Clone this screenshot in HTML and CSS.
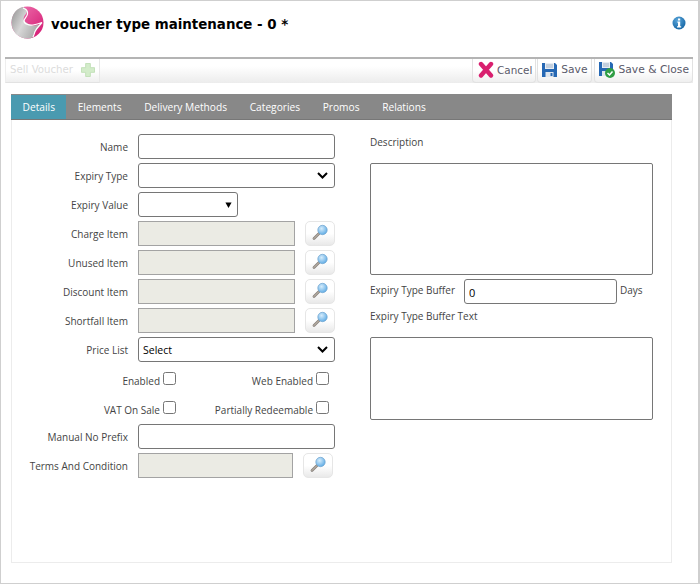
FILE: index.html
```html
<!DOCTYPE html>
<html lang="en">
<head>
<meta charset="utf-8">
<title>voucher type maintenance</title>
<link rel="stylesheet" href="styles.css">
</head>
<body>
<div class="window">
  <header class="head">
    <svg class="logo" width="33" height="33" viewBox="0 0 33 33">
      <defs>
        <linearGradient id="lg" x1="0" y1="0" x2="1" y2="0.5"><stop offset="0" stop-color="#8f8f8f"/><stop offset="0.5" stop-color="#d8d8d8"/><stop offset="1" stop-color="#a8a8a8"/></linearGradient>
        <linearGradient id="lp" x1="0" y1="0" x2="1" y2="1"><stop offset="0" stop-color="#f07ab4"/><stop offset="1" stop-color="#d3146f"/></linearGradient>
      </defs>
      <circle cx="16.5" cy="16.5" r="16" fill="url(#lp)"/>
      <path d="M12 1C5 2.500.5 9 .5 16.500c0 9 7 16 15.500 16 2.500 0 4.500-.5 6-1.500.5-2 .5-3.500 2-5 2-3 4.500-5.500 7-8.500-3 1.500-9 3.500-13.500.5-3-2-6-4 -4.500-7 1-2.500 3.500-4 3-7C16 3 14 2 12 1z" fill="url(#lg)"/>
      <path d="M12 2c3 1 5 3 4.500 6-.5 3-3.500 4.500-3.500 7 0 3 5 4.500 9 4 3.500-.5 6.500-1.500 9-2.500-2.500 3-5.500 5.500-7 9-.5 1.500-1 3.500-2 5.500" fill="none" stroke="#fff" stroke-width="1.200"/>
    </svg>
    <h1 class="title">voucher type maintenance - 0 *</h1>
    <svg class="info" width="14" height="14" viewBox="0 0 14 14">
      <defs><radialGradient id="ib" cx=".4" cy=".3" r=".8"><stop offset="0" stop-color="#5aa6da"/><stop offset="1" stop-color="#0d5e9e"/></radialGradient></defs>
      <circle cx="7" cy="7" r="6.500" fill="url(#ib)"/>
      <path d="M6 2.500h2.200v2H6zM5.400 5.500h2.800v4.700h1v1.300H5v-1.300h1V6.800h-.6z" fill="#fff"/>
    </svg>
  </header>

  <div class="toolbar">
    <button class="tool tool-off" type="button">Sell Voucher
      <svg width="14" height="14" viewBox="0 0 15 15"><path d="M5 .5h5v4.500h4.500v5H10v4.500H5V10H.5V5H5z" fill="#d3ecca" stroke="#c0dfb6"/></svg>
    </button>
    <div class="tool-right">
      <button class="tool tool-cancel" type="button">
        <svg width="16" height="17" viewBox="0 0 16 17"><path d="M3 3l10 11.500M13 3L3 14.500" fill="none" stroke="#d9206f" stroke-width="4.400" stroke-linecap="round"/></svg>
        Cancel</button>
      <button class="tool tool-save" type="button">
        <svg width="15" height="15" viewBox="0 0 15 15"><path d="M0 1h13l2 2v12H0z" fill="#2668b4"/><path d="M3 1h9v6H3z" fill="#e8edf3"/><path d="M4 3h7M4 5h7" stroke="#9fb2c8"/><path d="M3.500 10h8v5h-8z" fill="#dfe6ee"/><path d="M8.500 11h2v3h-2z" fill="#2668b4"/></svg>
        Save</button>
      <button class="tool tool-close" type="button">
        <svg width="16" height="16" viewBox="0 0 16 16"><path d="M0 0h12l2 2v12H0z" fill="#2668b4"/><path d="M3 0h8v6H3z" fill="#e8edf3"/><path d="M4 2h6M4 4h6" stroke="#9fb2c8"/><path d="M3 9h7v5H3z" fill="#dfe6ee"/><circle cx="11" cy="11" r="5" fill="#2f9e44"/><path d="M8.500 11l2 2 3-3.500" fill="none" stroke="#fff" stroke-width="1.500"/></svg>
        Save &amp; Close</button>
    </div>
  </div>

  <main class="panel">
    <nav class="tabs">
      <a class="tab tab-on">Details</a>
      <a class="tab">Elements</a>
      <a class="tab">Delivery Methods</a>
      <a class="tab">Categories</a>
      <a class="tab">Promos</a>
      <a class="tab">Relations</a>
    </nav>
    <div class="form">
      <section class="col-left">
        <div class="row"><label class="lbl">Name</label><input class="field" type="text"></div>
        <div class="row"><label class="lbl">Expiry Type</label>
          <div class="select-wrap"><select class="field"><option></option></select>
            <svg class="chev" width="11" height="7" viewBox="0 0 11 7"><path d="M1 1l4.500 4.500L10 1" fill="none" stroke="#000" stroke-width="2"/></svg></div></div>
        <div class="row"><label class="lbl">Expiry Value</label>
          <div class="select-wrap select-short"><select class="field"><option></option></select>
            <svg class="tri" width="7" height="8" viewBox="0 0 8 8"><path d="M.5 1h7L4 7.500z" fill="#000"/></svg></div></div>
        <div class="row"><label class="lbl">Charge Item</label><input class="field off" type="text" disabled>
          <button class="find" type="button"><svg width="20" height="20" viewBox="0 0 20 20"><use href="#mag"/></svg></button></div>
        <div class="row"><label class="lbl">Unused Item</label><input class="field off" type="text" disabled>
          <button class="find" type="button"><svg width="20" height="20" viewBox="0 0 20 20"><use href="#mag"/></svg></button></div>
        <div class="row"><label class="lbl">Discount Item</label><input class="field off" type="text" disabled>
          <button class="find" type="button"><svg width="20" height="20" viewBox="0 0 20 20"><use href="#mag"/></svg></button></div>
        <div class="row"><label class="lbl">Shortfall Item</label><input class="field off" type="text" disabled>
          <button class="find" type="button"><svg width="20" height="20" viewBox="0 0 20 20"><use href="#mag"/></svg></button></div>
        <div class="row"><label class="lbl">Price List</label>
          <div class="select-wrap"><select class="field"><option>Select</option></select>
            <svg class="chev" width="11" height="7" viewBox="0 0 11 7"><path d="M1 1l4.500 4.500L10 1" fill="none" stroke="#000" stroke-width="2"/></svg></div></div>
        <div class="checks">
          <label class="chk">Enabled<input type="checkbox"></label>
          <label class="chk">Web Enabled<input type="checkbox"></label>
          <label class="chk">VAT On Sale<input type="checkbox"></label>
          <label class="chk">Partially Redeemable<input type="checkbox"></label>
        </div>
        <div class="row"><label class="lbl">Manual No Prefix</label><input class="field" type="text"></div>
        <div class="row"><label class="lbl">Terms And Condition</label><input class="field off off-short" type="text" disabled>
          <button class="find" type="button"><svg width="20" height="20" viewBox="0 0 20 20"><use href="#mag"/></svg></button></div>
      </section>
      <section class="col-right">
        <label class="cap cap-desc">Description</label>
        <textarea class="area area-big"></textarea>
        <div class="buffer"><label class="cap buffer-lbl">Expiry Type Buffer</label><input class="field buffer-in" type="text" value="0"><span class="cap buffer-unit">Days</span></div>
        <label class="cap cap-text">Expiry Type Buffer Text</label>
        <textarea class="area area-small"></textarea>
      </section>
    </div>
  </main>
</div>
<svg class="defs" width="0" height="0">
  <defs>
    <radialGradient id="gl" cx=".4" cy=".35" r=".7"><stop offset="0" stop-color="#d6ecfb"/><stop offset="1" stop-color="#5aa9e4"/></radialGradient>
    <symbol id="mag" viewBox="0 0 20 20">
      <path d="M9 9.500L4 14.500" stroke="#8a8580" stroke-width="2.800" stroke-linecap="round"/>
      <path d="M9 9.500L4 14.500" stroke="#cfc3b4" stroke-width="1" stroke-linecap="round"/>
      <circle cx="12.500" cy="6" r="4.700" fill="url(#gl)" stroke="#6ea4cf" stroke-width=".7"/>
    </symbol>
  </defs>
</svg>
</body>
</html>
```
FILE: styles.css
```css
* { box-sizing: border-box; }
html, body { margin: 0; padding: 0; background: #fff; }
body { width: 700px; height: 584px; overflow: hidden; font-family: "Open Sans", "Noto Sans", sans-serif; font-size: 10px; color: #444; }
.defs { position: absolute; }

.window { width: 700px; height: 584px; border: solid #cfcfcf; border-width: 1px 2px 1px 1px; padding: 0 5px 0 4px; }

.head { height: 56px; display: flex; align-items: flex-start; }
.logo { margin: 5px 0 0 6px; flex: none; }
.title { margin: 15px 0 0 7px; font: bold 13.4px "DejaVu Sans", Verdana, sans-serif; color: #000; flex: 1; line-height: 18px; }
.info { margin: 15px 7px 0 0; flex: none; }

.toolbar { height: 26px; border-top: 2px solid #b4b4b4; display: flex; justify-content: space-between; background: linear-gradient(#fff 30%, #ececec); }
.tool-right { display: flex; gap: 1px; }
.tool { height: 24px; padding: 0 3px 2px 4px; display: flex; align-items: center; gap: 4px; background: linear-gradient(#fff 50%, #efefef); border: 1px solid #e2e2e2; border-top: 0; border-radius: 0 0 4px 4px; font: 10.7px "DejaVu Sans", Verdana, sans-serif; color: #5a5a6a; }
.tool-cancel { gap: 3px; padding-left: 5px; font-size: 10.4px; }
.tool-close { margin-left: 1px; }
.tool-off { color: #dcdcdc; padding: 0 4px 2px; gap: 8px; font-size: 10.2px; border-left-color: #eee; border-right-color: #e8e8e8; border-radius: 0; }

.panel { margin: 11px 21px 0 6px; height: 469px; border: solid #ececec; border-width: 0 1px 1px; display: flex; flex-direction: column; }
.tabs { height: 26px; margin: 0 -1px; background: #888; border-bottom: 1px solid #777; padding-top: 1px; display: flex; }
.tab { padding: 0 11.3px; line-height: 24px; color: #fff; font-size: 10.2px; }
.tab-on { background: #4a9ab0; padding: 0 11.4px 0 11.6px; }

.form { display: flex; padding-top: 14px; }
.col-left { width: 324px; flex: none; display: flex; flex-direction: column; gap: 4px; }
.row { display: flex; align-items: center; height: 25px; }
.lbl { width: 116px; margin-right: 10px; text-align: right; flex: none; }
.field { width: 197px; height: 25px; border: 1px solid #767676; border-radius: 3px; background: #fff; padding: 0 4px; font: 10.5px "Open Sans", sans-serif; color: #000; outline: 0; margin: 0; }
.off { width: 157px; background: #ebebe4; border-color: #a3a3a3; border-radius: 0; }
.off-short { width: 155px; }
.find { width: 30px; height: 25px; margin-left: 10px; padding: 0; display: flex; align-items: center; justify-content: center; border: 1px solid #e6e6e6; border-radius: 5px; background: linear-gradient(#fff 50%, #e9e9e9); }
.select-wrap { position: relative; width: 197px; height: 25px; }
.select-wrap select { appearance: none; -webkit-appearance: none; width: 100%; }
.select-short { width: 100px; }
.chev { position: absolute; right: 7px; top: 9px; pointer-events: none; }
.tri { position: absolute; right: 6px; top: 9px; pointer-events: none; }

.checks { display: grid; grid-template-columns: 164px 153px; grid-auto-rows: 29px; margin: 1px 0 -5px; height: 58px; }
.chk { display: flex; align-items: flex-start; justify-content: flex-end; line-height: 28px; }
.chk input { width: 13px; height: 13px; margin: 5px 0 0 3px; }

.col-right { width: 283px; margin-left: 34px; display: flex; flex-direction: column; }
.cap { display: block; line-height: 16px; }
.cap-desc { margin-bottom: 13px; }
.area { display: block; width: 283px; border: 1px solid #767676; border-radius: 2px; resize: none; margin: 0; outline: 0; background: #fff; }
.area-big { height: 112px; }
.area-small { height: 83px; }
.buffer { display: flex; align-items: flex-start; margin-top: 4px; height: 25px; }
.buffer-lbl { width: 94px; margin-top: 3px; flex: none; }
.buffer-in { width: 153px; font-size: 11px; padding: 1px 0 0 4px; }
.buffer-unit { margin: 3px 0 0 3px; }
.cap-text { margin: 4px 0 13px; }
```
